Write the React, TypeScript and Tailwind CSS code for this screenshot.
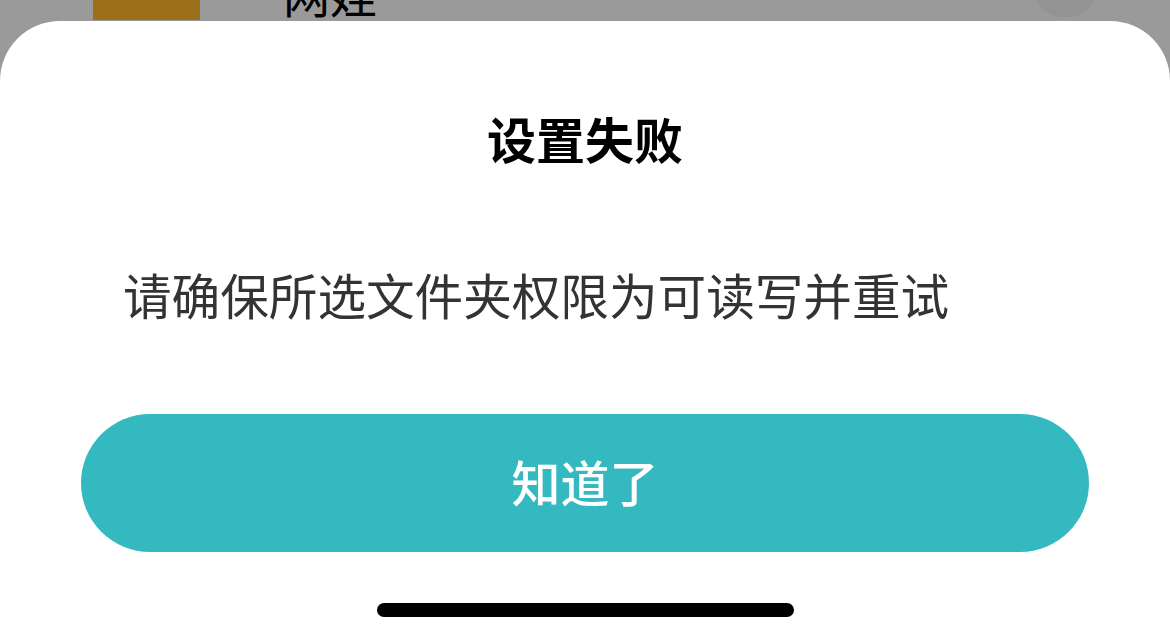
import React from "react";

export default function App() {
  const cjk = { fontFamily: '"Noto Sans CJK SC", "Noto Sans", sans-serif' };
  return (
    <div className="relative h-[642px] w-[1170px] overflow-hidden bg-[#9a9a9a]" style={cjk}>
      {/* background list row (under the sheet) */}
      <div className="flex items-start">
        <div className="ml-[93px] mt-[-40px] h-[60px] w-[107px] bg-[#9c6f1a]" />
        <div className="ml-[83px] mt-[-31px] text-[47px] leading-[48px] text-black">网娃</div>
        <div className="ml-auto mr-[72px] mt-[-40px] h-[57px] w-[65px] rounded-b-[30px] bg-[#939393]" />
      </div>

      {/* bottom sheet */}
      <div className="absolute inset-x-0 bottom-0 top-[21px] flex flex-col rounded-t-[60px] bg-white">
        <div className="mt-[93px] text-center text-[49px] font-bold leading-[48px] text-black">设置失败</div>
        <div className="mt-[108px] pl-[123px] text-[48.6px] leading-[48px] text-[#333333]">
          请确保所选文件夹权限为可读写并重试
        </div>
        <div className="mt-[96px] px-[81px]">
          <button className="flex h-[138px] w-full items-center justify-center rounded-full bg-[#35b9c1] pb-[4px] text-[49px] font-medium text-white">
            知道了
          </button>
        </div>
        <div className="mt-[51px] flex justify-center">
          <div className="h-[14px] w-[417px] rounded-full bg-black" />
        </div>
      </div>
    </div>
  );
}
